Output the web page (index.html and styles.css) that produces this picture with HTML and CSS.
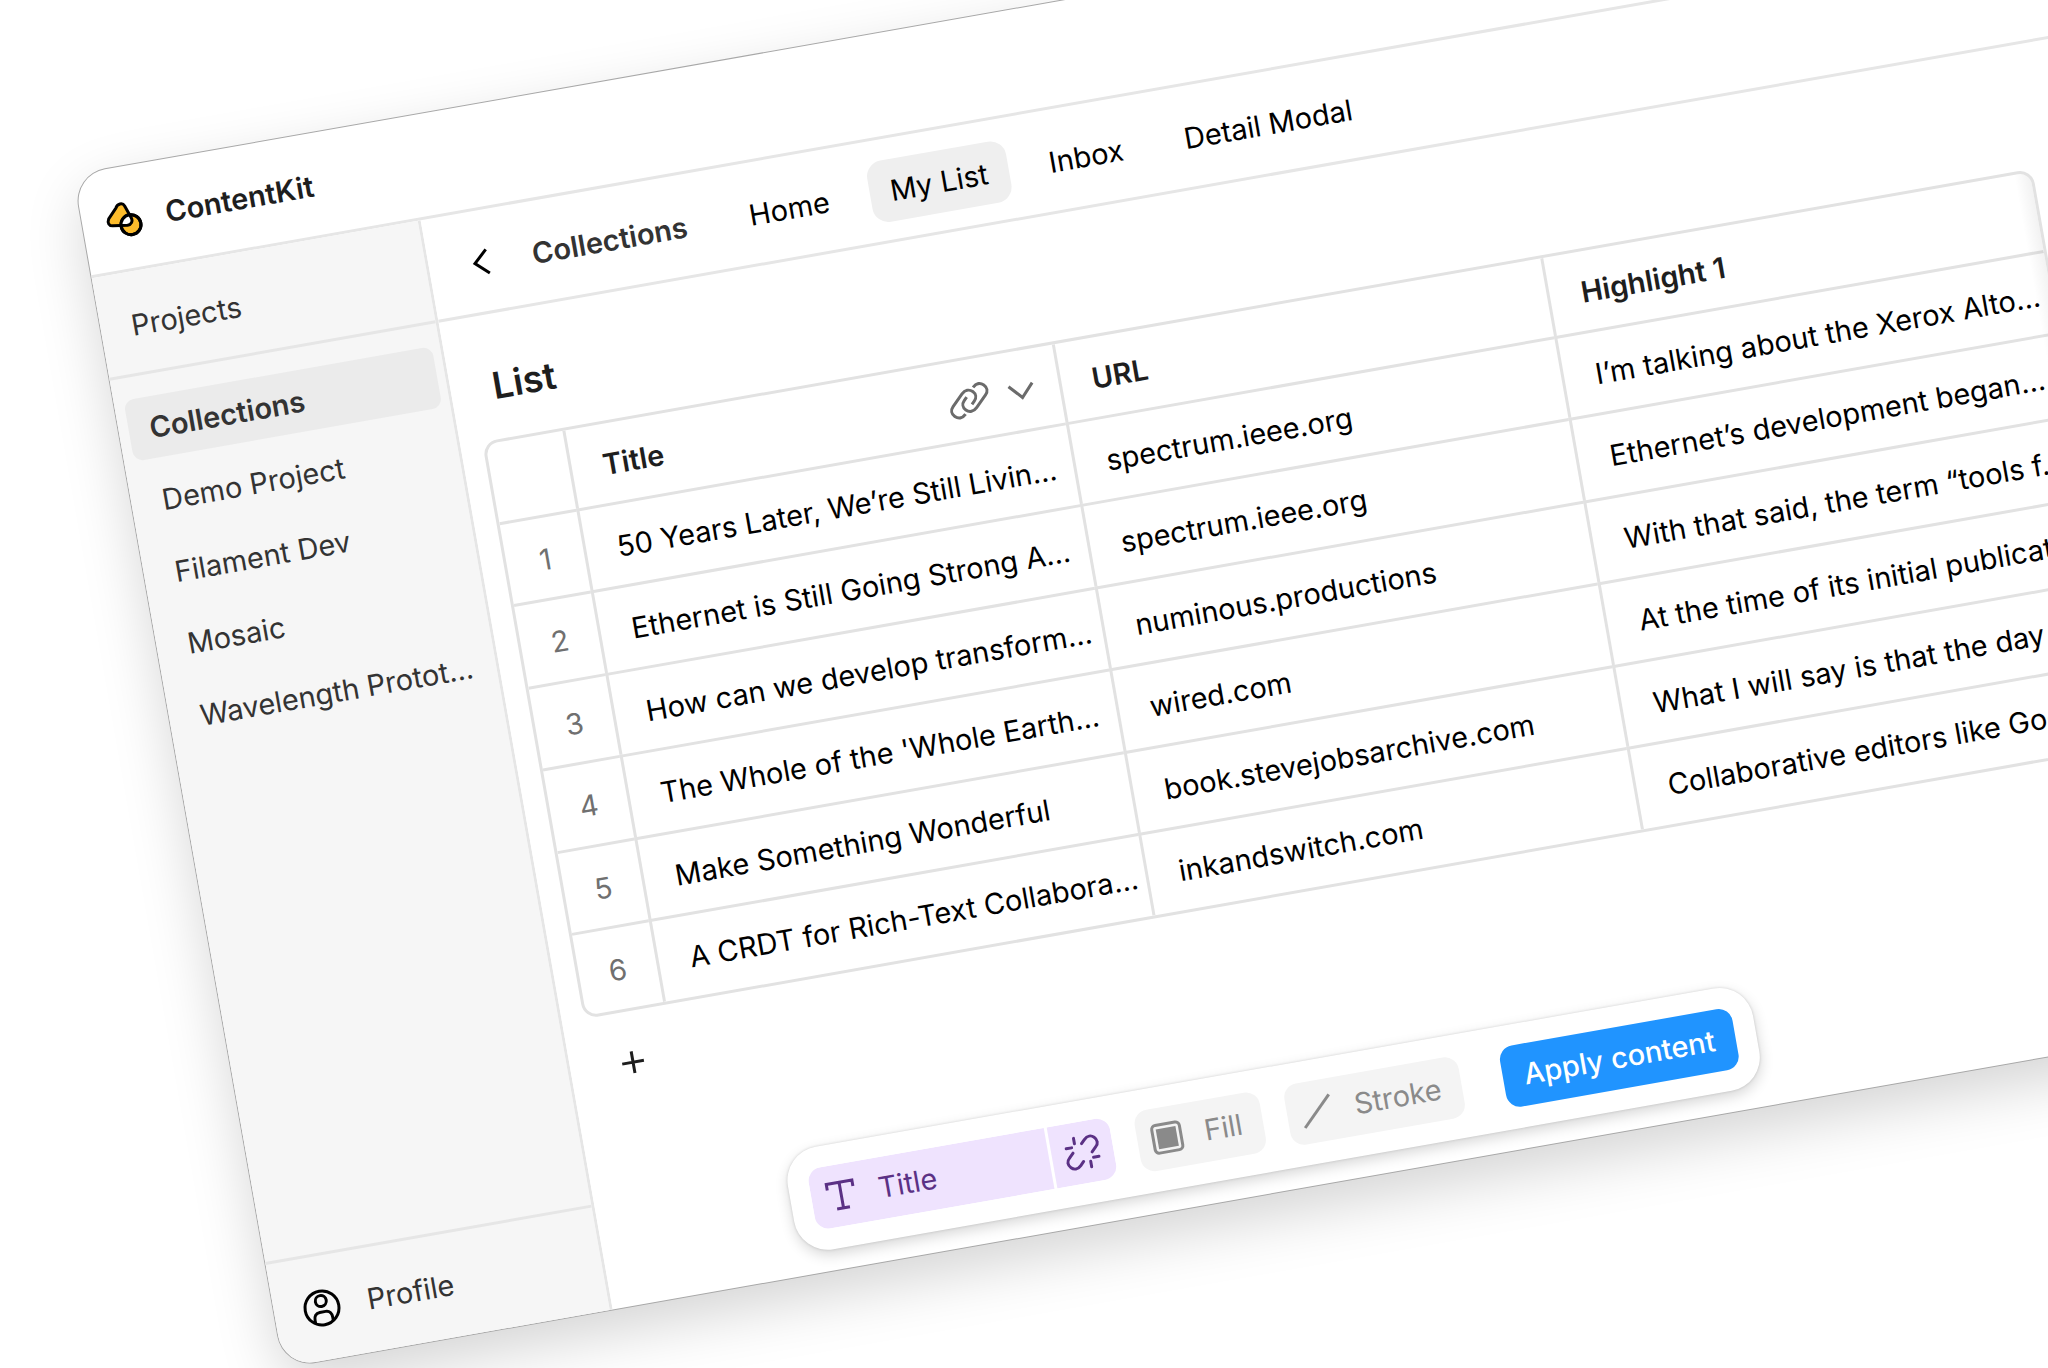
FILE: index.html
```html
<!DOCTYPE html>
<html lang="en">
<head>
<meta charset="utf-8">
<meta name="viewport" content="width=device-width, initial-scale=1">
<title>ContentKit</title>
<link rel="stylesheet" href="styles.css">
</head>
<body>
<div class="stage">
  <div class="window">
    <header class="titlebar">
      <svg class="logo" viewBox="-21 -21 42 42" aria-hidden="true">
        <defs>
          <clipPath id="lens"><circle cx="6" cy="6" r="10"/></clipPath>
        </defs>
        <path class="logo-fill" d="M-6 -13C-4 -17 1.500 -17.500 3 -13.500L7.500 -.5C8.500 3 6.500 6 2.500 6L-12 4C-16 3.500 -17 0 -15 -3.500Z"/>
        <circle class="logo-fill" cx="6" cy="6" r="10"/>
        <path class="logo-lens" clip-path="url(#lens)" d="M-6 -13C-4 -17 1.500 -17.500 3 -13.500L7.500 -.5C8.500 3 6.500 6 2.500 6L-12 4C-16 3.500 -17 0 -15 -3.500Z"/>
        <circle class="logo-line" cx="6" cy="6" r="10"/>
      </svg>
      <span class="brand">ContentKit</span>
    </header>

    <div class="body">
      <aside class="sidebar">
        <h2 class="sidebar-title">Projects</h2>
        <nav class="projects" aria-label="Projects">
          <a class="project project-current" href="#collections" aria-current="page">Collections</a>
          <a class="project" href="#demo">Demo Project</a>
          <a class="project" href="#filament">Filament Dev</a>
          <a class="project" href="#mosaic">Mosaic</a>
          <a class="project" href="#wavelength">Wavelength Protot…</a>
        </nav>
        <a class="profile" href="#profile">
          <svg class="icon-profile" viewBox="-20 -20 40 40" aria-hidden="true">
            <circle r="17"/>
            <circle cy="-7" r="5.500"/>
            <path d="M-9 14V11C-9 7 -7 4 -3 4H3C7 4 9 7 9 11V14"/>
          </svg>
          <span>Profile</span>
        </a>
      </aside>

      <main class="main">
        <nav class="tabs" aria-label="Collections">
          <button class="back" type="button" aria-label="Back">
            <svg class="icon-back" viewBox="0 0 18 28" aria-hidden="true"><path d="M15 2L2 14L15 26"/></svg>
          </button>
          <span class="crumb">Collections</span>
          <a class="tab" href="#home">Home</a>
          <a class="tab tab-current" href="#my-list" aria-current="page">My List</a>
          <a class="tab" href="#inbox">Inbox</a>
          <a class="tab" href="#detail">Detail Modal</a>
        </nav>

        <section class="content">
          <h1 class="heading">List</h1>
          <div class="table-frame">
            <table class="list">
              <colgroup><col class="col-index"><col><col><col></colgroup>
              <thead>
                <tr>
                  <th class="index"></th>
                  <th>
                    <div class="column-head">
                      <span>Title</span>
                      <button class="plain" type="button" aria-label="Linked layer">
                        <svg class="icon-link" viewBox="-21 -21 42 42" aria-hidden="true">
                          <path d="M-6 12.500C-10 16.500 -14 16 -17 13C-20 10 -20 6 -17 3L-6 -8C-2.500 -11.500 2 -11.500 5 -8.500C8 -5.500 7.500 -1.500 5 1L2 4"/>
                          <path transform="rotate(180)" d="M-6 12.500C-10 16.500 -14 16 -17 13C-20 10 -20 6 -17 3L-6 -8C-2.500 -11.500 2 -11.500 5 -8.500C8 -5.500 7.500 -1.500 5 1L2 4"/>
                        </svg>
                      </button>
                      <button class="plain" type="button" aria-label="Column options">
                        <svg class="icon-down" viewBox="0 0 28 16" aria-hidden="true"><path d="M2 1L14 14L26 1"/></svg>
                      </button>
                    </div>
                  </th>
                  <th>URL</th>
                  <th>Highlight 1</th>
                </tr>
              </thead>
              <tbody>
                <tr><td class="index">1</td><td>50 Years Later, We’re Still Livin…</td><td>spectrum.ieee.org</td><td>I’m talking about the Xerox Alto…</td></tr>
                <tr><td class="index">2</td><td>Ethernet is Still Going Strong A…</td><td>spectrum.ieee.org</td><td>Ethernet’s development began…</td></tr>
                <tr><td class="index">3</td><td>How can we develop transform…</td><td>numinous.productions</td><td>With that said, the term “tools f…</td></tr>
                <tr><td class="index">4</td><td>The Whole of the 'Whole Earth…</td><td>wired.com</td><td>At the time of its initial publicat…</td></tr>
                <tr><td class="index">5</td><td>Make Something Wonderful</td><td>book.stevejobsarchive.com</td><td>What I will say is that the day w…</td></tr>
                <tr><td class="index">6</td><td>A CRDT for Rich-Text Collabora…</td><td>inkandswitch.com</td><td>Collaborative editors like Goo…</td></tr>
              </tbody>
            </table>
          </div>
          <button class="add" type="button" aria-label="Add row">
            <svg class="icon-add" viewBox="0 0 22 22" aria-hidden="true"><path d="M11 0V22M0 11H22"/></svg>
          </button>
        </section>
      </main>
    </div>

    <div class="toolbar" role="toolbar" aria-label="Apply content">
      <div class="split">
        <button class="tool tool-title" type="button">
          <svg class="icon-tool" viewBox="-20 -20 40 40" aria-hidden="true"><path d="M-13 -7V-13H13V-7M0 -13V13M-6.500 13H6.500"/></svg>
          <span>Title</span>
        </button>
        <button class="tool tool-unlink" type="button" aria-label="Unlink">
          <svg class="icon-tool icon-unlink" viewBox="-20 -20 40 40" aria-hidden="true">
            <path d="M.5 -9L4 -12.500C7.500 -16 11.500 -15.500 14 -13C17 -10 17 -6 14 -3.500L9.500 1"/>
            <path transform="rotate(180)" d="M.5 -9L4 -12.500C7.500 -16 11.500 -15.500 14 -13C17 -10 17 -6 14 -3.500L9.500 1"/>
            <path d="M-6.500 -15.500V-10M-15.500 -6.500H-10M6.500 15.500V10M15.500 6.500H10"/>
          </svg>
        </button>
      </div>
      <button class="tool tool-muted" type="button">
        <svg class="icon-tool" viewBox="-20 -20 40 40" aria-hidden="true">
          <rect x="-14" y="-14" width="28" height="28" rx="4"/>
          <rect class="swatch" x="-10" y="-10" width="20" height="20"/>
        </svg>
        <span>Fill</span>
      </button>
      <button class="tool tool-muted" type="button">
        <svg class="icon-tool" viewBox="-20 -20 40 40" aria-hidden="true"><path d="M-14.500 14.500L14.500 -14.500"/></svg>
        <span>Stroke</span>
      </button>
      <button class="tool apply" type="button">Apply content</button>
    </div>
  </div>
</div>
</body>
</html>
```
FILE: styles.css
```css
* {
  box-sizing: border-box;
}

body {
  margin: 0;
  height: 100vh;
  overflow: hidden;
  background: #fff;
  color: #000;
  font: 400 29px/36px Inter, "Liberation Sans", sans-serif;
}

a {
  color: inherit;
  text-decoration: none;
}

button {
  margin: 0;
  padding: 0;
  border: 0;
  background: none;
  color: inherit;
  font: inherit;
  cursor: pointer;
}

svg {
  display: block;
  flex: none;
  overflow: visible;
  fill: none;
  stroke: currentColor;
  stroke-width: 3;
}

/* The whole window leans ten degrees to the left. */
.stage {
  padding: 185px 0 0 42px;
  transform: rotate(-10deg);
  transform-origin: 0 0;
}

.window {
  position: relative;
  width: calc(100vw - 12px);
  border-radius: 32px;
  background: #fff;
  box-shadow: 0 0 0 1px #a8a8a8, 0 22px 58px rgba(0, 0, 0, .17);
}

.titlebar {
  display: flex;
  align-items: center;
  gap: 21px;
  height: 105px;
  padding: 4px 21px 0;
  border-bottom: 3px solid #e6e6e6;
}

.logo {
  width: 42px;
  height: 42px;
  stroke: #000;
}

.logo-fill {
  fill: #fdbc2c;
}

.logo-lens {
  fill: #fff;
}

.brand {
  color: #1e1e1e;
  font-weight: 600;
}

.body {
  display: flex;
}

/* Sidebar */
.sidebar {
  display: flex;
  flex-direction: column;
  flex: none;
  width: 334px;
  border-right: 3px solid #e6e6e6;
  border-bottom-left-radius: 32px;
  background: #f6f6f6;
  color: #333;
}

.sidebar-title {
  margin: 0;
  padding: 36px 31px 29px;
  border-bottom: 3px solid #e6e6e6;
  font: inherit;
}

.projects {
  display: flex;
  flex-direction: column;
  gap: 11px;
  flex: 1;
  padding: 22px 8px 22px 10px;
}

.project {
  padding: 14px 21px 12px;
  border-radius: 10px;
  white-space: nowrap;
}

.project-current {
  background: #ebebeb;
  font-weight: 600;
}

.profile {
  display: flex;
  align-items: center;
  gap: 26px;
  height: 107px;
  padding: 0 28px;
  border-top: 3px solid #e6e6e6;
}

.icon-profile {
  width: 40px;
  height: 40px;
  color: #000;
}

/* Tabs */
.main {
  flex: 1;
  min-width: 0;
}

.tabs {
  display: flex;
  align-items: center;
  gap: 20px;
  height: 104px;
  padding: 3px 44px 0;
  border-bottom: 3px solid #e6e6e6;
}

.icon-back {
  width: 18px;
  height: 28px;
}

.crumb {
  padding: 2px 22px 0;
  color: #333;
  font-weight: 600;
}

.tab {
  padding: 14px 21px 12px;
  border-radius: 16px;
}

.tab-current {
  background: #efefef;
}

/* List */
.content {
  padding: 49px 106px 209px 22px;
}

.heading {
  margin: 0 0 30px;
  padding: 0 20px;
  color: #1e1e1e;
  font-size: 37px;
  font-weight: 600;
  line-height: 46px;
}

.table-frame {
  position: relative;
  overflow: hidden;
  border: 3px solid #e2e2e2;
  border-radius: 15px;
}

.table-frame::after {
  content: "";
  position: absolute;
  inset: 0 0 0 auto;
  width: 16px;
  background: linear-gradient(to right, transparent, rgba(0, 0, 0, .05));
}

.list {
  width: 100%;
  border-spacing: 0;
  table-layout: fixed;
}

.col-index {
  width: 78px;
}

.list th,
.list td {
  height: 83px;
  padding: 3px 24px 0 31px;
  border-left: 3px solid #e2e2e2;
  border-top: 3px solid #e2e2e2;
  text-align: left;
  vertical-align: middle;
  white-space: nowrap;
}

.list th {
  height: 79px;
  border-top: 0;
  color: #1e1e1e;
  font-weight: 600;
}

.list tr:nth-child(even) td {
  height: 84px;
}

.list .index {
  padding: 3px 0 0;
  border-left: 0;
  color: #707070;
  text-align: center;
}

.column-head {
  display: flex;
  align-items: center;
  gap: 18px;
  color: #1e1e1e;
}

.column-head span {
  flex: 1;
}

.plain {
  color: #6b6b6b;
}

.icon-link {
  width: 42px;
  height: 42px;
}

.icon-down {
  width: 28px;
  height: 16px;
}

.add {
  display: flex;
  align-items: center;
  justify-content: center;
  width: 62px;
  height: 62px;
  margin: 20px 10px 0;
  color: #1e1e1e;
}

.icon-add {
  width: 22px;
  height: 22px;
}

/* Floating toolbar */
.toolbar {
  position: absolute;
  right: 0;
  bottom: 21px;
  left: 0;
  display: flex;
  gap: 25px;
  width: max-content;
  margin: 0 auto;
  padding: 21px;
  border-radius: 34px;
  background: #fff;
  box-shadow: 0 0 3px rgba(0, 0, 0, .16), 0 5px 14px rgba(0, 0, 0, .16);
}

.split {
  display: flex;
  gap: 3px;
  overflow: hidden;
  border-radius: 14px;
  color: #5b3185;
}

.tool {
  display: flex;
  align-items: center;
  gap: 18px;
  height: 62px;
  padding: 0 21px 0 10px;
  border-radius: 14px;
}

.tool-title,
.tool-unlink {
  border-radius: 0;
  background: #efe3fe;
}

.tool-title {
  width: 241px;
}

.tool-unlink {
  padding: 0 11px;
}

.icon-tool {
  width: 40px;
  height: 40px;
}

.icon-unlink {
  stroke-linecap: round;
}

.swatch {
  fill: currentColor;
  stroke: none;
}

.tool-muted {
  background: #f4f4f4;
  color: #8a8a8a;
}

.apply {
  margin-left: 17px;
  padding: 0 21px;
  background: #2094ff;
  color: #fff;
  font-weight: 500;
}
```
